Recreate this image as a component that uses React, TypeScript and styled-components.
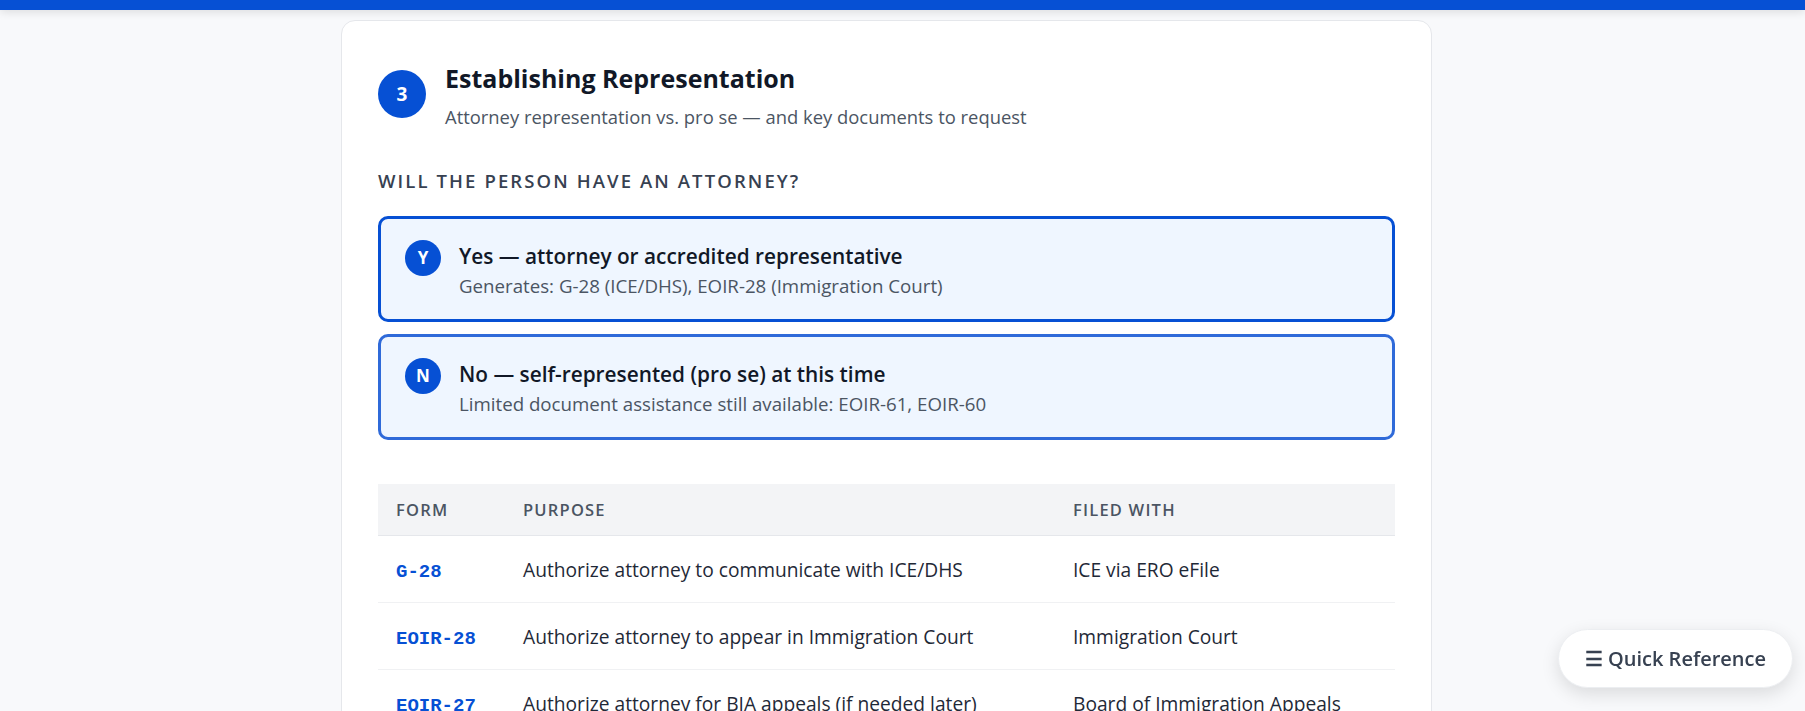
import React from "react"
import styled, { createGlobalStyle } from "styled-components"

const GlobalStyle = createGlobalStyle`
  html, body {
    margin: 0;
    padding: 0;
    background: #f8f9fb;
    overflow: hidden;
    font-family: "Open Sans", "Noto Sans", sans-serif;
    color: #111827;
  }
  * { box-sizing: border-box; }
`

const forms = [
  { code: "G-28", purpose: "Authorize attorney to communicate with ICE/DHS", filed: "ICE via ERO eFile" },
  { code: "EOIR-28", purpose: "Authorize attorney to appear in Immigration Court", filed: "Immigration Court" },
  { code: "EOIR-27", purpose: "Authorize attorney for BIA appeals (if needed later)", filed: "Board of Immigration Appeals" },
]

const choices = [
  {
    key: "Y",
    title: "Yes — attorney or accredited representative",
    note: "Generates: G-28 (ICE/DHS), EOIR-28 (Immigration Court)",
    selected: true,
  },
  {
    key: "N",
    title: "No — self-represented (pro se) at this time",
    note: "Limited document assistance still available: EOIR-61, EOIR-60",
    selected: false,
  },
]

export default function App() {
  return (
    <>
      <GlobalStyle />
      <TopBar />
      <Main>
        <Card>
          <Header>
            <StepBadge>3</StepBadge>
            <HeaderText>
              <Title>Establishing Representation</Title>
              <Subtitle>Attorney representation vs. pro se — and key documents to request</Subtitle>
            </HeaderText>
          </Header>

          <SectionLabel>Will the person have an attorney?</SectionLabel>

          <Choices>
            {choices.map((c) => (
              <Choice key={c.key} $selected={c.selected}>
                <ChoiceKey>{c.key}</ChoiceKey>
                <ChoiceText>
                  <ChoiceTitle>{c.title}</ChoiceTitle>
                  <ChoiceNote>{c.note}</ChoiceNote>
                </ChoiceText>
              </Choice>
            ))}
          </Choices>

          <FormTable>
            <colgroup>
              <col style={{ width: 127 }} />
              <col style={{ width: 550 }} />
              <col />
            </colgroup>
            <thead>
              <tr>
                <Th>Form</Th>
                <Th>Purpose</Th>
                <Th>Filed with</Th>
              </tr>
            </thead>
            <tbody>
              {forms.map((f) => (
                <tr key={f.code}>
                  <Td>
                    <Code>{f.code}</Code>
                  </Td>
                  <Td>{f.purpose}</Td>
                  <Td>{f.filed}</Td>
                </tr>
              ))}
            </tbody>
          </FormTable>
        </Card>
      </Main>
      <QuickRef>☰ Quick Reference</QuickRef>
    </>
  )
}

const TopBar = styled.div`
  height: 10px;
  background: #0650d4;
  box-shadow: 0 2px 10px rgba(0, 0, 0, 0.12);
  position: relative;
  z-index: 2;
`

const Main = styled.main`
  padding: 10px 32px 0 0;
`

const Card = styled.section`
  max-width: 1091px;
  margin: 0 auto;
  background: #fff;
  border: 1px solid #e5e7eb;
  border-radius: 14px;
  padding: 49px 36px 40px;
`

const Header = styled.div`
  display: flex;
  align-items: flex-start;
  gap: 19px;
`

const StepBadge = styled.div`
  flex: none;
  width: 48px;
  height: 48px;
  border-radius: 50%;
  background: #0650d4;
  color: #fff;
  font-weight: 700;
  font-size: 19px;
  display: flex;
  align-items: center;
  justify-content: center;
`

const HeaderText = styled.div`
  margin-top: -7px;
`

const Title = styled.h2`
  margin: 0;
  font-size: 25px;
  line-height: 30px;
  font-weight: 700;
  color: #111827;
`

const Subtitle = styled.p`
  margin: 10px 0 0;
  font-size: 18.4px;
  line-height: 27.6px;
  color: #4b5563;
`

const SectionLabel = styled.h3`
  margin: 37px 0 22px;
  font-size: 18.5px;
  line-height: 26px;
  font-weight: 600;
  text-transform: uppercase;
  letter-spacing: 2.1px;
  color: #374151;
`

const Choices = styled.div`
  display: flex;
  flex-direction: column;
  gap: 12px;
`

const Choice = styled.div<{ $selected: boolean }>`
  display: flex;
  align-items: flex-start;
  gap: 18px;
  height: 106px;
  padding: 21px 24px;
  background: #eff6ff;
  border: 3px solid ${(p) => (p.$selected ? "#0650d4" : "#2f6ad9")};
  border-radius: 10px;
`

const ChoiceKey = styled.div`
  flex: none;
  width: 36px;
  height: 36px;
  border-radius: 50%;
  background: #0650d4;
  color: #fff;
  font-weight: 700;
  font-size: 17px;
  display: flex;
  align-items: center;
  justify-content: center;
`

const ChoiceText = styled.div`
  margin-top: 2px;
`

const ChoiceTitle = styled.div`
  font-size: 20.8px;
  line-height: 28px;
  font-weight: 600;
  color: #111827;
`

const ChoiceNote = styled.div`
  margin-top: 3px;
  font-size: 18.7px;
  line-height: 26px;
  color: #4b5563;
`

const FormTable = styled.table`
  width: 100%;
  margin-top: 44px;
  border-collapse: collapse;
  table-layout: fixed;
`

const Th = styled.th`
  background: #f3f4f6;
  height: 52px;
  padding: 0 18px;
  text-align: left;
  font-size: 16.5px;
  font-weight: 600;
  letter-spacing: 1.2px;
  text-transform: uppercase;
  color: #4b5563;
  border-bottom: 1px solid #e5e7eb;
`

const Td = styled.td`
  height: 67px;
  padding: 0 18px;
  font-size: 19.2px;
  color: #1f2937;
  border-bottom: 1px solid #f0f1f3;
  vertical-align: middle;
`

const Code = styled.span`
  font-family: "Liberation Mono", "DejaVu Sans Mono", monospace;
  font-weight: 700;
  font-size: 19px;
  color: #0650d4;
`

const QuickRef = styled.button`
  position: fixed;
  right: 12px;
  bottom: 23px;
  height: 59px;
  padding: 0 26px;
  border: 1px solid #eceef1;
  border-radius: 30px;
  background: #fff;
  box-shadow: 0 6px 18px rgba(0, 0, 0, 0.12);
  font-family: "Open Sans", sans-serif;
  font-size: 20px;
  font-weight: 600;
  color: #374151;
`
